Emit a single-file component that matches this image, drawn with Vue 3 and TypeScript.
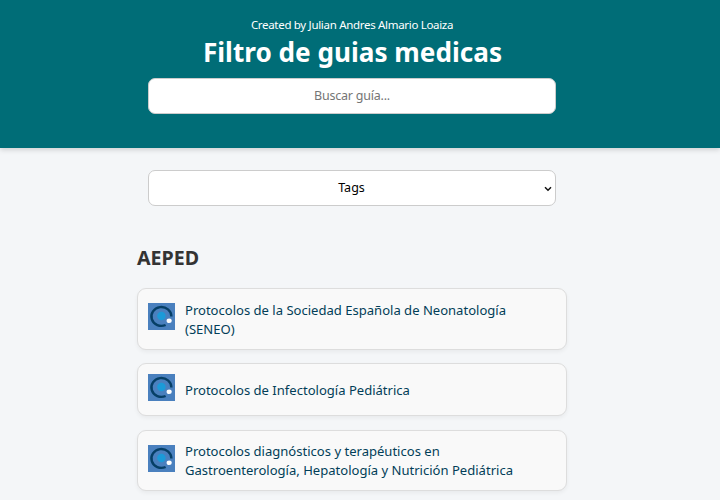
<script setup lang="ts">
import { ref } from 'vue'

interface Guide {
  title: string
}

interface GuideGroup {
  name: string
  guides: Guide[]
}

const query = ref<string>('')
const tag = ref<string>('')

const groups: GuideGroup[] = [
  {
    name: 'AEPED',
    guides: [
      { title: 'Protocolos de la Sociedad Española de Neonatología (SENEO)' },
      { title: 'Protocolos de Infectología Pediátrica' },
      { title: 'Protocolos diagnósticos y terapéuticos en Gastroenterología, Hepatología y Nutrición Pediátrica' },
    ],
  },
]
</script>

<template>
  <div class="page">
    <header class="header">
      <p class="author">Created by Julian Andres Almario Loaiza</p>
      <h1 class="title">Filtro de guias medicas</h1>
      <input v-model="query" class="field" type="text" placeholder="Buscar guía..." />
    </header>
    <main class="main">
      <div class="picker">
        <select v-model="tag" class="field tags">
          <option value="">Tags</option>
        </select>
        <svg class="arrow" viewBox="0 0 8 6" aria-hidden="true">
          <path d="M1 1.2L4 4.2L7 1.2" fill="none" stroke="#111" stroke-width="1.5" />
        </svg>
      </div>
      <section v-for="group in groups" :key="group.name" class="group">
        <h2 class="group-name">{{ group.name }}</h2>
        <ul class="list">
          <li v-for="guide in group.guides" :key="guide.title" class="card">
            <svg class="logo" viewBox="0 0 27 27" aria-hidden="true">
              <rect width="27" height="27" fill="#4a80be" />
              <path d="M23.4 13.5A10 9.4 0 1 0 17.6 22" fill="none" stroke="#063f66" stroke-width="2.4" />
              <circle cx="13.4" cy="13" r="4.2" fill="#1b9ad8" />
              <ellipse cx="21.2" cy="17.8" rx="2.6" ry="2.3" fill="#fff" />
            </svg>
            <a class="link">{{ guide.title }}</a>
          </li>
        </ul>
      </section>
    </main>
  </div>
</template>

<style>
body {
  margin: 0;
  overflow: hidden;
  background: #f4f6f8;
}
</style>

<style scoped>
.page {
  height: 500px;
  overflow: hidden;
  background: #f4f6f8;
  color: #333;
  font-family: "Noto Sans", sans-serif;
}

.header {
  display: flex;
  flex-direction: column;
  align-items: center;
  box-sizing: border-box;
  height: 148px;
  padding: 17px 16px 0 0;
  background: #006d77;
  color: #fff;
  box-shadow: 0 2px 5px rgba(0, 0, 0, 0.15);
}

.author {
  margin: 0;
  font-size: 11.5px;
  letter-spacing: -0.31px;
  line-height: 16px;
}

.title {
  margin: 0 0 6px;
  padding-left: 1px;
  font-size: 26.15px;
  font-weight: 700;
  line-height: 39px;
}

.field {
  display: block;
  box-sizing: border-box;
  width: 408px;
  height: 36px;
  padding: 0 10px 2px;
  border: 1px solid #ccc;
  border-radius: 7px;
  background-color: #fff;
  color: #000;
  font-family: inherit;
  font-size: 12.5px;
  letter-spacing: -0.22px;
  text-align: center;
}

.field::placeholder {
  color: #757575;
}

.main {
  display: flex;
  flex-direction: column;
  align-items: center;
  padding: 22px 16px 0 0;
}

.picker {
  position: relative;
}

.tags {
  padding: 0 1px 1px 0;
  appearance: none;
  letter-spacing: 0;
}

.arrow {
  position: absolute;
  top: 16px;
  right: 4px;
  width: 8px;
  height: 6px;
  pointer-events: none;
}

.group {
  width: 430px;
  margin: 38.2px 0 0 0;
}

.group-name {
  margin: 0 0 16px;
  font-size: 19.6px;
  font-weight: 700;
  line-height: 28px;
}

.list {
  display: flex;
  flex-direction: column;
  gap: 13.4px;
  margin: 0;
  padding: 0;
  list-style: none;
}

.card {
  display: flex;
  align-items: center;
  gap: 10px;
  box-sizing: border-box;
  padding: 9.6px 10px 9.4px;
  border: 1px solid #ddd;
  border-radius: 9px;
  background: #f9f9f9;
  box-shadow: 0 2px 4px rgba(0, 0, 0, 0.05);
}

.logo {
  flex: none;
  width: 27px;
  height: 27px;
  margin-bottom: 4.8px;
}

.link {
  padding: 2px 0 0.8px;
  color: #023e58;
  font-size: 13.05px;
  line-height: 19px;
}
</style>
